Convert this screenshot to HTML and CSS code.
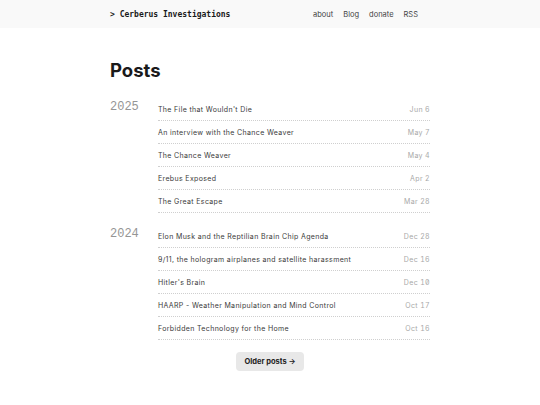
FILE: index.html
```html
<!DOCTYPE html>
<html lang="en">
<head>
    <meta charset="UTF-8">
    <meta name="viewport" content="width=device-width, initial-scale=1.0">
    <title>Posts - Cerberus Investigations</title>
    <link rel="stylesheet" href="styles.css">
</head>
<body>

<header class="site-header">
    <div class="header-inner">
        <a class="brand" href="#">&gt; Cerberus Investigations</a>
        <nav class="site-nav">
            <a href="#">about</a>
            <a href="#">Blog</a>
            <a href="#">donate</a>
            <a href="#">RSS</a>
        </nav>
    </div>
</header>

<main class="container">
    <h1 class="page-title">Posts</h1>

    <section class="year-group">
        <div class="year">2025</div>
        <ul class="post-list">
            <li><a href="#">The File that Wouldn't Die</a><span class="date">Jun 6</span></li>
            <li><a href="#">An interview with the Chance Weaver</a><span class="date">May 7</span></li>
            <li><a href="#">The Chance Weaver</a><span class="date">May 4</span></li>
            <li><a href="#">Erebus Exposed</a><span class="date">Apr 2</span></li>
            <li><a href="#">The Great Escape</a><span class="date">Mar 28</span></li>
        </ul>
    </section>

    <section class="year-group">
        <div class="year">2024</div>
        <ul class="post-list">
            <li><a href="#">Elon Musk and the Reptilian Brain Chip Agenda</a><span class="date">Dec 28</span></li>
            <li><a href="#">9/11, the hologram airplanes and satellite harassment</a><span class="date">Dec 16</span></li>
            <li><a href="#">Hitler's Brain</a><span class="date">Dec 10</span></li>
            <li><a href="#">HAARP - Weather Manipulation and Mind Control</a><span class="date">Oct 17</span></li>
            <li><a href="#">Forbidden Technology for the Home</a><span class="date">Oct 16</span></li>
        </ul>
    </section>

    <div class="pager">
        <a class="older-btn" href="#">Older posts &rarr;</a>
    </div>
</main>

</body>
</html>
```

FILE: styles.css
```css
body {
    font-family: Inter, "Noto Sans", sans-serif;
    background-color: #ffffff;
    color: #222;
    margin: 0;
    padding: 0;
}
a {
    color: inherit;
    text-decoration: none;
}
.site-header {
    background-color: #f9f9f9;
    height: 28px;
}
.header-inner {
    width: 320px;
    margin: 0 auto;
    height: 28px;
    display: flex;
    align-items: center;
    justify-content: space-between;
    padding-right: 12px;
    box-sizing: border-box;
}
.brand {
    font-family: "DejaVu Sans Mono", monospace;
    font-weight: bold;
    font-size: 8px;
    color: #1a1a1a;
}
.site-nav {
    display: flex;
    gap: 10px;
}
.site-nav a {
    font-size: 7.5px;
    color: #444;
}
.container {
    width: 320px;
    margin: 0 auto;
    padding-top: 30px;
}
.page-title {
    font-size: 18.5px;
    font-weight: 700;
    color: #1a1a1a;
    margin: 0 0 15px;
    line-height: 25px;
}
.year-group {
    display: flex;
    margin-bottom: 12px;
}
.year {
    width: 48px;
    flex-shrink: 0;
    font-family: "Liberation Mono", monospace;
    font-size: 12px;
    color: #959595;
    line-height: 18px;
}
.post-list {
    list-style: none;
    margin: 0;
    padding: 0;
    flex: 1;
}
.post-list li {
    display: flex;
    justify-content: space-between;
    align-items: center;
    height: 22px;
    border-bottom: 1px dotted #cfcfcf;
    font-size: 7px;
    letter-spacing: 0.35px;
}
.post-list li a {
    color: #3a3a3a;
}
.date {
    color: #a8a8a8;
    font-variant-numeric: tabular-nums slashed-zero;
}
.pager {
    display: flex;
    justify-content: center;
}
.older-btn {
    display: inline-block;
    background-color: #e8e8e8;
    color: #222;
    font-size: 7.5px;
    font-weight: 700;
    padding: 5px 8px;
    border-radius: 4px;
    line-height: 9px;
}
```
